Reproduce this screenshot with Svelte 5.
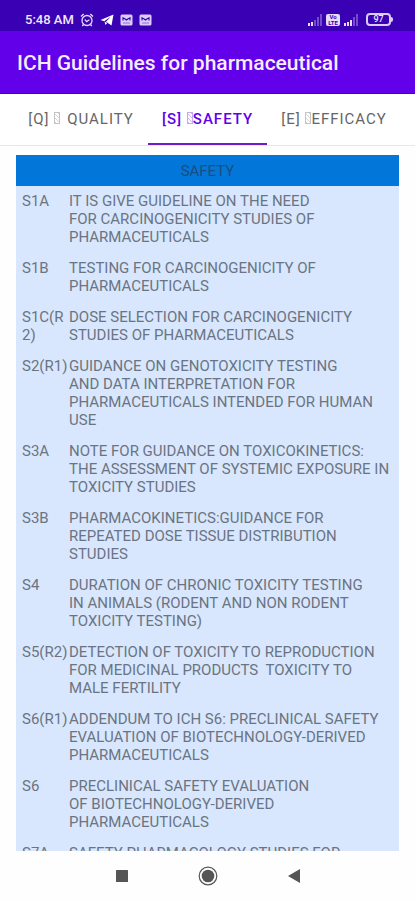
<script>
	let active = $state('S');

	const tabs = [
		{ id: 'Q', name: 'QUALITY', spaced: true },
		{ id: 'S', name: 'SAFETY' },
		{ id: 'E', name: 'EFFICACY' }
	];

	const guidelines = [
		{ code: 'S1A', text: 'IT IS GIVE GUIDELINE ON THE NEED\nFOR CARCINOGENICITY STUDIES OF\nPHARMACEUTICALS' },
		{ code: 'S1B', text: 'TESTING FOR CARCINOGENICITY OF\nPHARMACEUTICALS' },
		{ code: 'S1C(R2)', text: 'DOSE SELECTION FOR CARCINOGENICITY\nSTUDIES OF PHARMACEUTICALS' },
		{
			code: 'S2(R1)',
			text: 'GUIDANCE ON GENOTOXICITY TESTING\nAND DATA INTERPRETATION FOR\nPHARMACEUTICALS INTENDED FOR HUMAN\nUSE'
		},
		{
			code: 'S3A',
			text: 'NOTE FOR GUIDANCE ON TOXICOKINETICS:\nTHE ASSESSMENT OF SYSTEMIC EXPOSURE IN\nTOXICITY STUDIES'
		},
		{ code: 'S3B', text: 'PHARMACOKINETICS:GUIDANCE FOR\nREPEATED DOSE TISSUE DISTRIBUTION\nSTUDIES' },
		{
			code: 'S4',
			text: 'DURATION OF CHRONIC TOXICITY TESTING\nIN ANIMALS (RODENT AND NON RODENT\nTOXICITY TESTING)'
		},
		{
			code: 'S5(R2)',
			text: 'DETECTION OF TOXICITY TO REPRODUCTION\nFOR MEDICINAL PRODUCTS  TOXICITY TO\nMALE FERTILITY'
		},
		{
			code: 'S6(R1)',
			text: 'ADDENDUM TO ICH S6: PRECLINICAL SAFETY\nEVALUATION OF BIOTECHNOLOGY-DERIVED\nPHARMACEUTICALS'
		},
		{ code: 'S6', text: 'PRECLINICAL SAFETY EVALUATION\nOF BIOTECHNOLOGY-DERIVED\nPHARMACEUTICALS' },
		{ code: 'S7A', text: 'SAFETY PHARMACOLOGY STUDIES FOR' }
	];
</script>

{#snippet mail()}
	<svg width="13" height="12" viewBox="0 0 13 12" aria-hidden="true">
		<rect x="0.5" y="0.5" width="12" height="11" rx="1.5" fill="#d9cdf5" />
		<path d="M3 3v3.500M10 3v3.500M3 3.500 6.500 6 10 3.500" fill="none" stroke="#3a00b0" stroke-width="1.1" />
		<path d="M3 9h7" stroke="#8f70d4" />
	</svg>
{/snippet}

{#snippet signal(bars)}
	<svg width="16" height="12" viewBox="0 0 16 12" fill="#e5dcfa" aria-hidden="true">
		{#each [3, 4, 6, 9, 12] as h, i}
			<rect x={i * 3 + 1} y={12 - h} width="2" height={h} opacity={i < bars ? 1 : 0.35} />
		{/each}
	</svg>
{/snippet}

<div class="screen">
	<div class="status">
		<div class="group">
			<span class="time">5:48 AM</span>
			<svg width="14" height="14" viewBox="0 0 14 14" fill="none" stroke="#e5dcfa" aria-hidden="true">
				<circle cx="7" cy="7.5" r="5" stroke-width="1.3" />
				<path d="M1 3.5 3.7 1M13 3.5 10.3 1M3.5 11.5 2.3 13M10.5 11.5l1.2 1.5" stroke-width="1.4" />
				<path d="M4.8 6.5 6.7 8.6 9.4 6.8" stroke-width="1.2" />
			</svg>
			<svg width="14" height="12" viewBox="0 0 14 12" fill="#fff" aria-hidden="true">
				<path d="M13.5.5.5 6l3.7 1.2L10.7 2.8 6 7.8l5.5 3.7z" />
				<path d="M4.5 7.5 5.5 11 7.2 9z" />
			</svg>
			{@render mail()}
			{@render mail()}
		</div>
		<div class="group right">
			{@render signal(2)}
			<span class="volte"><span>Vo</span><span>LTE</span></span>
			{@render signal(3)}
			<span class="battery">97</span>
		</div>
	</div>

	<header>
		<h1>ICH Guidelines for pharmaceutical</h1>
	</header>

	<nav>
		{#each tabs as tab}
			<button class:active={active === tab.id} onclick={() => (active = tab.id)}>
				[{tab.id}] <i class="glyph" class:spaced={tab.spaced}></i>{tab.name}
			</button>
		{/each}
	</nav>

	<main>
		<table>
			<colgroup>
				<col class="code-col" />
				<col />
			</colgroup>
			<thead>
				<tr><th colspan="2">SAFETY</th></tr>
			</thead>
			<tbody>
				{#each guidelines as item}
					<tr>
						<td class="code">{item.code}</td>
						<td class="text">{item.text}</td>
					</tr>
				{/each}
			</tbody>
		</table>
	</main>

	<footer>
		<button aria-label="Recent apps">
			<svg width="12" height="12" viewBox="0 0 12 12"><rect width="12" height="12" rx="0.5" fill="#555" /></svg>
		</button>
		<button aria-label="Home">
			<svg width="20" height="20" viewBox="0 0 20 20">
				<circle cx="10" cy="10" r="8.8" fill="none" stroke="#555" stroke-width="1.2" />
				<circle cx="10" cy="10" r="6.3" fill="#555" />
			</svg>
		</button>
		<button aria-label="Back">
			<svg width="12" height="14" viewBox="0 0 12 14"><path d="M12 0v14L0 7z" fill="#555" /></svg>
		</button>
	</footer>
</div>

<style>
	:global(body) {
		margin: 0;
		background: #fefefe;
	}

	.screen {
		display: flex;
		flex-direction: column;
		height: 100vh;
		font-family: Roboto, 'Liberation Sans', sans-serif;
	}

	button {
		margin: 0;
		padding: 0;
		border: 0;
		background: none;
		font-family: inherit;
		cursor: pointer;
	}

	.status {
		display: flex;
		justify-content: space-between;
		align-items: center;
		box-sizing: border-box;
		height: 31px;
		padding: 8px 24px 0 25px;
		background: #3a00b3;
		color: #efe8fd;
	}

	.group {
		display: flex;
		align-items: center;
		gap: 6px;
	}

	.right {
		gap: 3px;
	}

	.time {
		font-size: 13px;
		font-weight: 500;
	}

	.volte {
		display: flex;
		flex-direction: column;
		align-items: center;
		width: 14px;
		border-radius: 2px;
		background: #e5dcfa;
		color: #3a00b3;
		font-size: 6px;
		line-height: 6px;
		font-weight: 700;
	}

	.battery {
		position: relative;
		box-sizing: border-box;
		width: 25px;
		margin-left: 4px;
		border: 2px solid #d9cdf5;
		border-radius: 4px;
		font-size: 9px;
		line-height: 9px;
		font-weight: 500;
		text-align: center;
	}

	.battery::after {
		content: '';
		position: absolute;
		top: 2px;
		right: -4px;
		width: 2px;
		height: 5px;
		border-radius: 0 2px 2px 0;
		background: #d9cdf5;
	}

	header {
		display: flex;
		align-items: center;
		box-sizing: border-box;
		height: 63px;
		padding: 2px 17px 0;
		border-bottom: 1px solid #4a00c0;
		background: #6200ea;
	}

	h1 {
		margin: 0;
		color: #f4edff;
		font-size: 21px;
		line-height: 28px;
		font-weight: 500;
	}

	nav {
		display: flex;
		justify-content: center;
		height: 51px;
		border-bottom: 1px solid #e8e8e8;
		background: #fff;
	}

	nav button {
		padding: 0 14px;
		border-bottom: 2px solid transparent;
		color: #666;
		font-size: 15px;
		font-weight: 400;
		letter-spacing: 1px;
		white-space: nowrap;
	}

	nav button.active {
		border-bottom-color: #6a1fc8;
		color: #6200ea;
		font-weight: 500;
	}

	.glyph {
		display: inline-block;
		width: 4px;
		height: 10px;
		border: 1px solid #c4c4c4;
		background: repeating-linear-gradient(45deg, #d4d4d4 0 1px, #fff 1px 3px);
	}

	.active .glyph {
		border-color: #c5a8ee;
		background: repeating-linear-gradient(45deg, #cdb4f0 0 1px, #fff 1px 3px);
	}

	.spaced {
		margin-right: 7px;
	}

	main {
		flex: 1;
		min-height: 0;
		padding: 9px 16px 0;
		overflow-y: auto;
		scrollbar-width: none;
	}

	table {
		width: 100%;
		border-collapse: collapse;
		table-layout: fixed;
		background: #d8e7fd;
		color: #6b7482;
		font-size: 15px;
		line-height: 18px;
	}

	.code-col {
		width: 53px;
	}

	th {
		height: 31px;
		padding: 0;
		background: #0277d9;
		color: #1b4d80;
		font-weight: 400;
	}

	td {
		padding: 6px 0;
		vertical-align: top;
	}

	.code {
		padding-left: 6px;
		overflow-wrap: anywhere;
	}

	.text {
		padding-bottom: 7px;
		white-space: pre-wrap;
	}

	footer {
		display: flex;
		justify-content: center;
		align-items: center;
		height: 49px;
		background: #fefefe;
	}

	footer button {
		display: flex;
		justify-content: center;
		align-items: center;
		width: 86px;
		height: 48px;
	}
</style>
